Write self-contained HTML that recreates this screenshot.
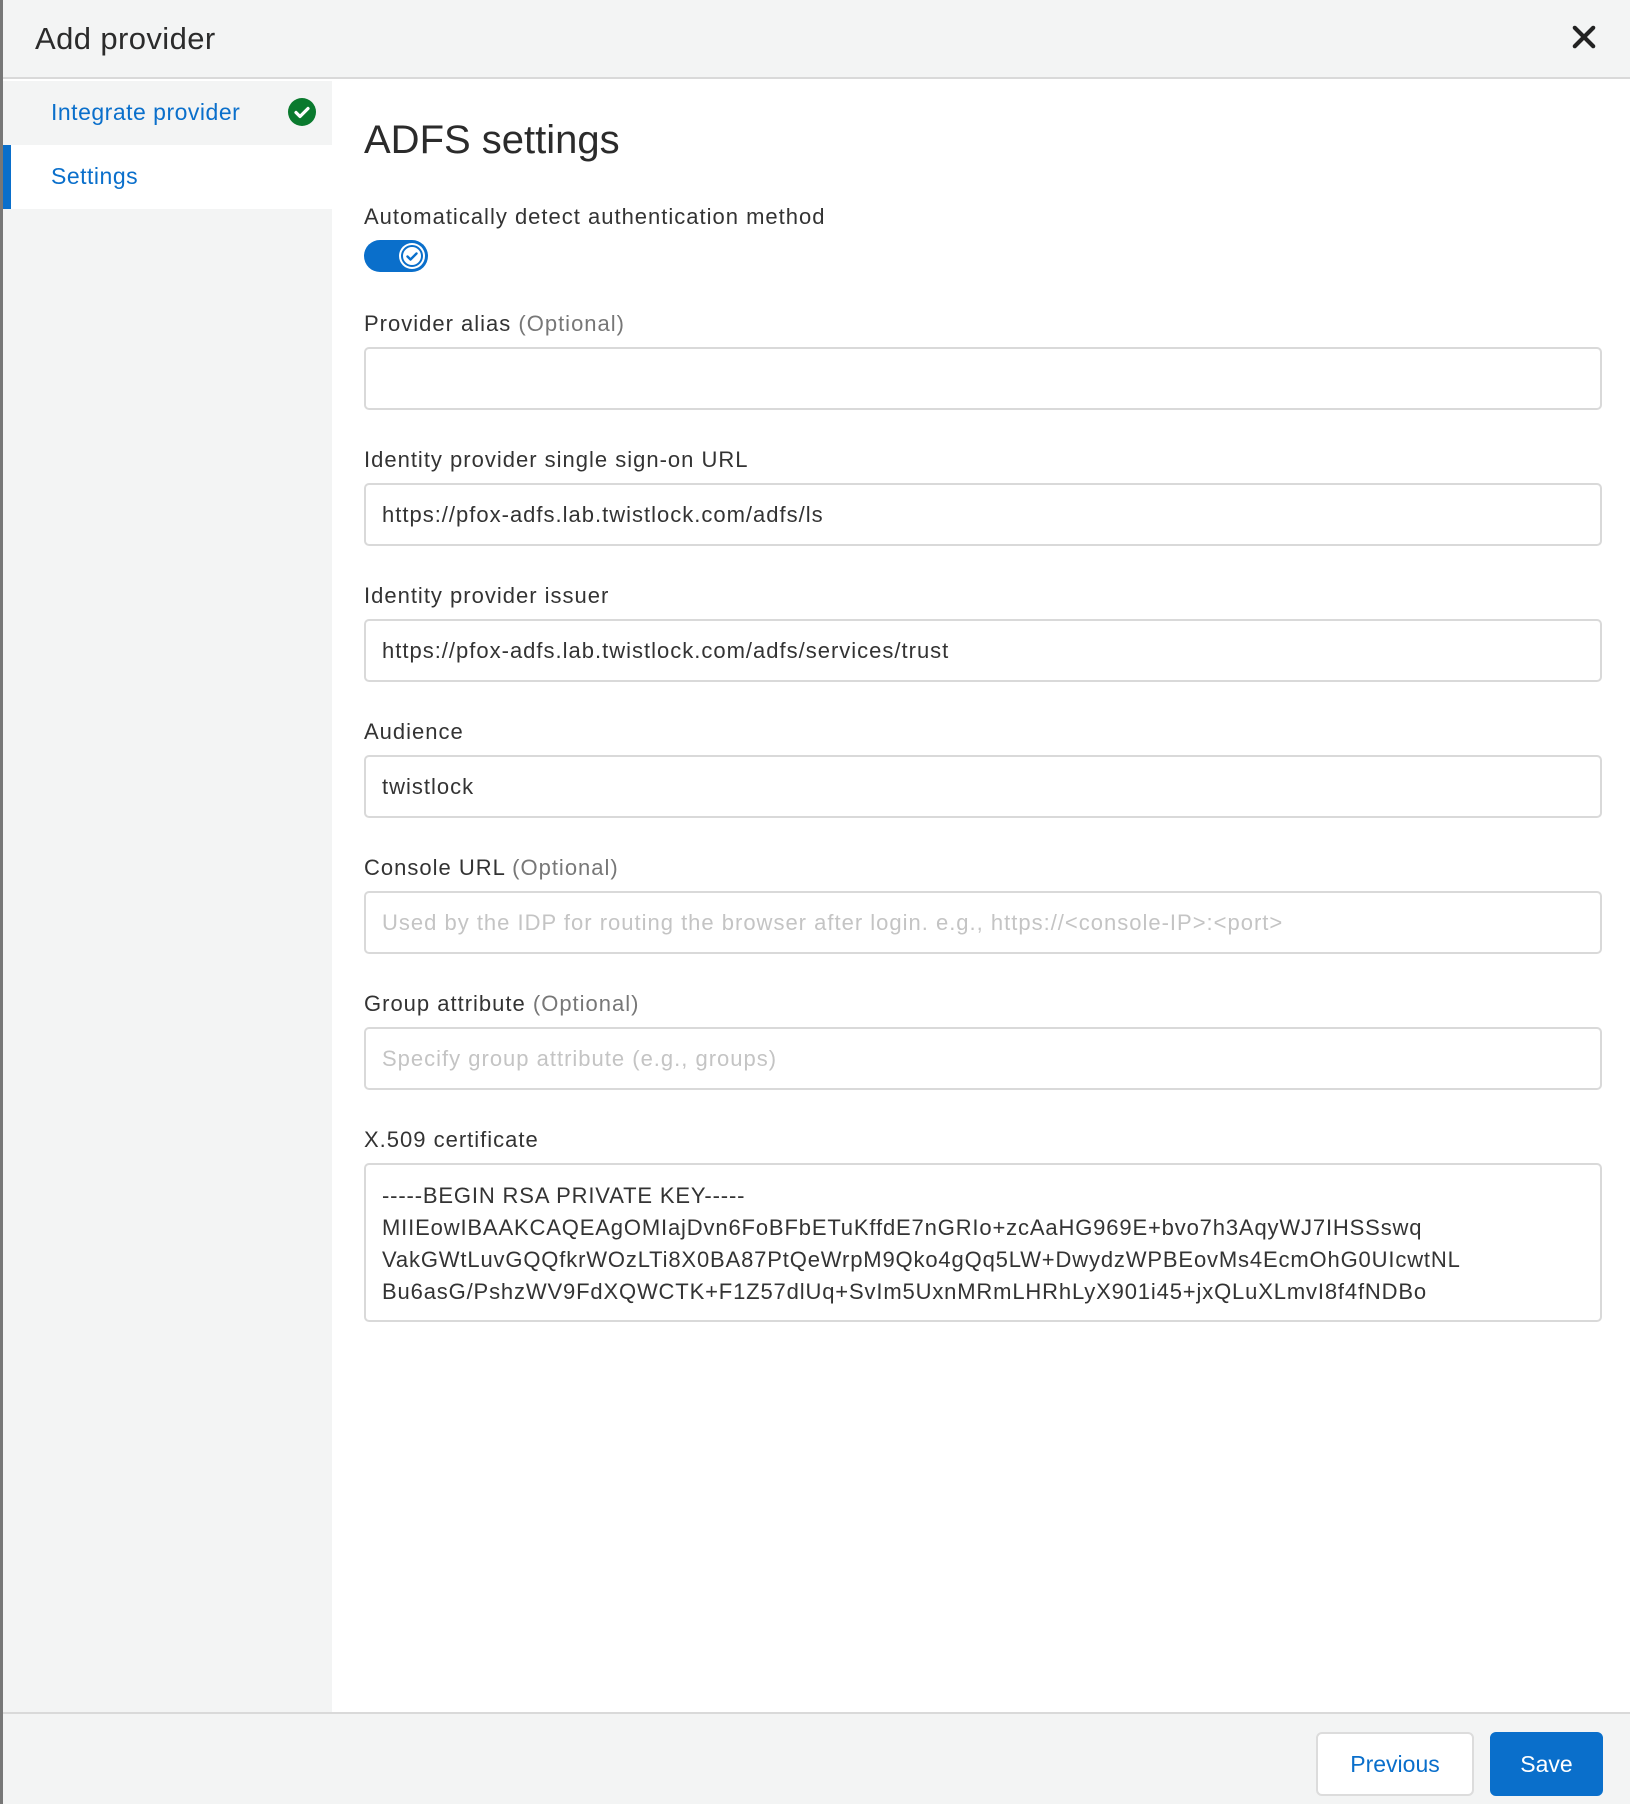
<!DOCTYPE html>
<html><head><meta charset="utf-8"><style>
*{box-sizing:border-box;margin:0;padding:0}
body{width:1630px;height:1804px;overflow:hidden;background:#fff;font-family:"Liberation Sans",sans-serif;color:#333;position:relative}
.edge{position:absolute;left:0;top:0;width:3px;height:1804px;background:#777}
.header{position:absolute;left:3px;top:0;right:0;height:79px;background:#f3f4f4;border-bottom:2px solid #d9d9d9}
.header h1{position:absolute;left:32px;top:21px;font-size:31px;font-weight:normal;color:#2b2b2b;letter-spacing:0.4px}
.close{position:absolute;right:34px;top:25px}
.side{position:absolute;left:3px;top:81px;width:329px;height:1632px;background:#f3f4f4}
.item{height:64px;line-height:62px;padding-left:48px;font-size:23px;color:#0a6fcb;position:relative;letter-spacing:0.5px}
.item.act{background:#fff}
.item.act:before{content:"";position:absolute;left:0;top:0;width:8px;height:64px;background:#0a6fcb}
.chk{position:absolute;left:285px;top:17px}
.main{position:absolute;left:364px;top:0;width:1238px}
.h2{position:absolute;top:118px;font-size:40px;color:#2b2b2b;white-space:nowrap}
.lbl{position:absolute;font-size:22px;color:#333;white-space:nowrap;letter-spacing:1px;margin-top:2px}
.lbl span{color:#777}
.inp{position:absolute;left:0;width:1238px;height:63px;border:2px solid #d9d9d9;border-radius:5px;font-size:22px;padding-left:16px;line-height:59px;white-space:nowrap;letter-spacing:1px}
.ph{color:#c4c4c4}
.ta{position:absolute;left:0;top:1163px;width:1238px;height:159px;border:2px solid #d9d9d9;border-radius:5px;font-size:22px;padding:15px 16px;line-height:32px;white-space:nowrap;letter-spacing:0.85px}
.toggle{position:absolute;top:240px;left:0;width:64px;height:32px;border-radius:16px;background:#0a6fcb}
.knob{position:absolute;right:3px;top:3px;width:26px;height:26px;border-radius:50%;background:#fff}
.footer{position:absolute;left:3px;top:1712px;right:0;height:92px;background:#f3f4f4;border-top:2px solid #d9d9d9}
.btn{position:absolute;top:18px;height:64px;border-radius:6px;font-size:23px;line-height:60px;text-align:center}
.prev{left:1313px;width:158px;background:#fff;border:2px solid #dcdcdc;color:#0a6fcb}
.save{left:1487px;width:113px;background:#0a6fcb;color:#fff;border:2px solid #0a6fcb}
</style></head><body>
<div class="edge"></div>
<div class="header"><h1>Add provider</h1>
<svg class="close" width="24" height="24" viewBox="0 0 26 26"><path d="M3 3L23 23M23 3L3 23" stroke="#222" stroke-width="4.5" stroke-linecap="round"/></svg></div>
<div class="side">
<div class="item">Integrate provider<svg class="chk" width="28" height="28" viewBox="0 0 28 28"><circle cx="14" cy="14" r="14" fill="#0a7a2e"/><path d="M8 14.5l4 4 8-8" stroke="#fff" stroke-width="3.2" fill="none" stroke-linecap="round" stroke-linejoin="round"/></svg></div>
<div class="item act">Settings</div>
</div>
<div class="main">
<div class="h2">ADFS settings</div>
<div class="lbl" style="top:202px">Automatically detect authentication method</div>
<div class="toggle"><div class="knob"><svg width="26" height="26" viewBox="0 0 26 26"><circle cx="13" cy="13" r="10" fill="none" stroke="#0a6fcb" stroke-width="2"/><path d="M8.5 13.5l3 3 6-6" stroke="#0a6fcb" stroke-width="2.4" fill="none" stroke-linecap="round" stroke-linejoin="round"/></svg></div></div>
<div class="lbl" style="top:309px">Provider alias <span>(Optional)</span></div>
<div class="inp" style="top:347px"></div>
<div class="lbl" style="top:445px">Identity provider single sign-on URL</div>
<div class="inp" style="top:483px">https://pfox-adfs.lab.twistlock.com/adfs/ls</div>
<div class="lbl" style="top:581px">Identity provider issuer</div>
<div class="inp" style="top:619px">https://pfox-adfs.lab.twistlock.com/adfs/services/trust</div>
<div class="lbl" style="top:717px">Audience</div>
<div class="inp" style="top:755px">twistlock</div>
<div class="lbl" style="top:853px">Console URL <span>(Optional)</span></div>
<div class="inp ph" style="top:891px">Used by the IDP for routing the browser after login. e.g., https://&lt;console-IP&gt;:&lt;port&gt;</div>
<div class="lbl" style="top:989px">Group attribute <span>(Optional)</span></div>
<div class="inp ph" style="top:1027px">Specify group attribute (e.g., groups)</div>
<div class="lbl" style="top:1125px">X.509 certificate</div>
<div class="ta">-----BEGIN RSA PRIVATE KEY-----<br>MIIEowIBAAKCAQEAgOMIajDvn6FoBFbETuKffdE7nGRIo+zcAaHG969E+bvo7h3AqyWJ7IHSSswq<br>VakGWtLuvGQQfkrWOzLTi8X0BA87PtQeWrpM9Qko4gQq5LW+DwydzWPBEovMs4EcmOhG0UIcwtNL<br>Bu6asG/PshzWV9FdXQWCTK+F1Z57dlUq+SvIm5UxnMRmLHRhLyX901i45+jxQLuXLmvI8f4fNDBo</div>
</div>
<div class="footer">
<div class="btn prev">Previous</div>
<div class="btn save">Save</div>
</div>
</body></html>
